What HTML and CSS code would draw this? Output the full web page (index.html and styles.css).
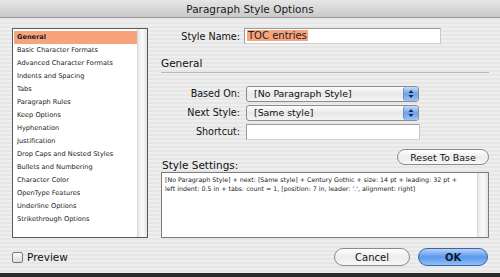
FILE: index.html
```html
<!DOCTYPE html>
<html>
<head>
<meta http-equiv="Content-Type" content="text/html; charset=utf-8"/>
<title>Paragraph Style Options</title>
<link rel="stylesheet" href="styles.css">
</head>
<body>
<div class="window">
  <div class="titlebar">Paragraph Style Options</div>

  <div class="content">
    <div class="sidebar">
      <ul class="list">
        <li class="selected">General</li>
        <li>Basic Character Formats</li>
        <li>Advanced Character Formats</li>
        <li>Indents and Spacing</li>
        <li>Tabs</li>
        <li>Paragraph Rules</li>
        <li>Keep Options</li>
        <li>Hyphenation</li>
        <li>Justification</li>
        <li>Drop Caps and Nested Styles</li>
        <li>Bullets and Numbering</li>
        <li>Character Color</li>
        <li>OpenType Features</li>
        <li>Underline Options</li>
        <li>Strikethrough Options</li>
      </ul>
      <div class="scrolltrack"></div>
    </div>

    <div class="main">
      <div class="row name-row">
        <label class="label">Style Name:</label>
        <div class="field name-field"><span class="hilite">TOC entries</span></div>
      </div>

      <div class="section-title">General</div>

      <div class="row">
        <label class="label">Based On:</label>
        <div class="select"><span>[No Paragraph Style]</span><span class="arrows"><svg width="6" height="10" viewBox="0 0 6 10"><path d="M3 1 L5.5 4 H0.5 Z M3 9 L5.5 6 H0.5 Z" fill="#1b2a4a"/></svg></span></div>
      </div>
      <div class="row">
        <label class="label">Next Style:</label>
        <div class="select"><span>[Same style]</span><span class="arrows"><svg width="6" height="10" viewBox="0 0 6 10"><path d="M3 1 L5.5 4 H0.5 Z M3 9 L5.5 6 H0.5 Z" fill="#1b2a4a"/></svg></span></div>
      </div>
      <div class="row">
        <label class="label">Shortcut:</label>
        <div class="field shortcut"></div>
      </div>

      <div class="settings-head">
        <span class="settings-label">Style Settings:</span>
        <button class="btn reset">Reset To Base</button>
      </div>
      <div class="settings">
        <div class="settings-text">[No Paragraph Style] + next: [Same style] + Century Gothic + size: 14 pt + leading: 32 pt + left indent: 0.5 in + tabs: count = 1, [position: 7 in, leader: '.', alignment: right]</div>
        <div class="scrolltrack"></div>
      </div>
    </div>
  </div>

  <div class="footer">
    <div class="preview"><span class="checkbox"></span>Preview</div>
    <div class="buttons">
      <button class="btn cancel">Cancel</button>
      <button class="btn ok">OK</button>
    </div>
  </div>
</div>
</body>
</html>
```

FILE: styles.css
```css
body {
  margin: 0;
  background: #2a2a2a;
  font-family: "DejaVu Sans", "Liberation Sans", sans-serif;
}

.window {
  width: 500px;
  height: 273px;
  background: repeating-linear-gradient(#eeeeee 0, #eeeeee 2px, #e6e6e6 2px, #e6e6e6 4px);
  display: flex;
  flex-direction: column;
  overflow: hidden;
}

.titlebar {
  height: 17px;
  line-height: 18px;
  text-align: center;
  font-size: 10.5px;
  color: #1a1a1a;
  background: linear-gradient(#e6e6e6, #c9c9c9);
  border-bottom: 1px solid #9a9a9a;
}

.content {
  display: flex;
  padding: 10px 0 0 12px;
}

/* category list */
.sidebar {
  width: 134px;
  height: 208px;
  border: 1px solid #5a5a5a;
  background: #fff;
  display: flex;
}

.list {
  list-style: none;
  margin: 0;
  padding: 2px 0 0 1px;
  flex: 1;
}

.list li {
  height: 13px;
  line-height: 13px;
  padding-left: 3px;
  font-size: 6.6px;
  color: #222;
  white-space: nowrap;
}

.list li.selected {
  background: #f9a37c;
  font-weight: bold;
}

.scrolltrack {
  width: 9px;
  background: linear-gradient(90deg, #e9e9e9, #fafafa 50%, #e4e4e4);
  border-left: 1px solid #d8d8d8;
}

/* right side */
.main {
  margin-left: 13px;
  width: 328px;
  display: flex;
  flex-direction: column;
}

.row {
  display: flex;
  align-items: center;
  height: 15px;
  margin-bottom: 4px;
}

.label {
  box-sizing: border-box;
  width: 83px;
  padding-right: 4px;
  text-align: right;
  font-size: 9.6px;
  color: #111;
}

.name-row {
  height: 16px;
  margin-bottom: 0;
}

.field {
  height: 14px;
  background: #fff;
  border: 1px solid #9c9c9c;
  border-right-color: #c8c8c8;
  border-bottom-color: #d0d0d0;
  font-size: 10px;
  line-height: 14px;
}

.name-field {
  width: 193px;
  padding-left: 2px;
}

.hilite {
  background: #f9a37c;
  color: #222;
  padding: 0 1px;
}

.section-title {
  margin-top: 13px;
  padding-bottom: 2px;
  border-bottom: 1px solid #b8b8b8;
  font-size: 10.5px;
  color: #111;
  height: 13px;
  margin-bottom: 13px;
}

.select {
  width: 164px;
  height: 14px;
  display: flex;
  justify-content: space-between;
  align-items: center;
  border: 1px solid #8c8c8c;
  border-radius: 3px;
  background: linear-gradient(#fdfdfd, #e8e8e8 50%, #f4f4f4);
  font-size: 9.4px;
  padding-left: 7px;
  margin-left: 2px;
  color: #111;
}

.arrows {
  width: 14px;
  height: 14px;
  border-radius: 3px;
  display: flex;
  align-items: center;
  justify-content: center;
  background: linear-gradient(#c7dcfa, #6ea2ec 50%, #9cc3f6);
  border-left: 1px solid #6d8fc0;
}

.shortcut {
  width: 172px;
  height: 14px;
  margin-left: 2px;
}

.settings-head {
  display: flex;
  justify-content: space-between;
  align-items: flex-end;
  margin-top: 8px;
  height: 20px;
}

.settings-label {
  font-size: 10.5px;
  color: #111;
  padding-left: 1px;
}

.btn {
  font-family: "DejaVu Sans", "Liberation Sans", sans-serif;
  font-size: 9.5px;
  color: #111;
  border: 1px solid #8a8a8a;
  border-radius: 9px;
  background: linear-gradient(#ffffff, #ececec 50%, #f8f8f8);
  padding: 0;
}

.reset {
  width: 92px;
  height: 16px;
  margin-bottom: 6px;
}

.settings {
  display: flex;
  height: 64px;
  border: 1px solid #7c7c7c;
  background: #fff;
  margin-top: 1px;
}

.settings-text {
  flex: 1;
  padding: 2px 12px 2px 3px;
  font-size: 6.3px;
  line-height: 9px;
  color: #222;
}

.settings .scrolltrack {
  width: 10px;
}

.footer {
  display: flex;
  justify-content: space-between;
  align-items: center;
  padding: 0 12px;
  margin-top: 10px;
}

.preview {
  display: flex;
  align-items: center;
  font-size: 10.5px;
  color: #111;
}

.checkbox {
  width: 9px;
  height: 9px;
  border: 1px solid #7a7a7a;
  border-radius: 2px;
  background: linear-gradient(#fafafa, #dcdcdc);
  margin-right: 4px;
}

.buttons {
  display: flex;
  gap: 8px;
}

.cancel {
  width: 76px;
  height: 18px;
  font-size: 10px;
}

.ok {
  width: 70px;
  height: 18px;
  font-size: 10px;
  font-weight: bold;
  color: #0c1a33;
  border-color: #3c65a8;
  background: linear-gradient(#b7d3fb, #5b98ec 50%, #8ec0f7);
}
```
